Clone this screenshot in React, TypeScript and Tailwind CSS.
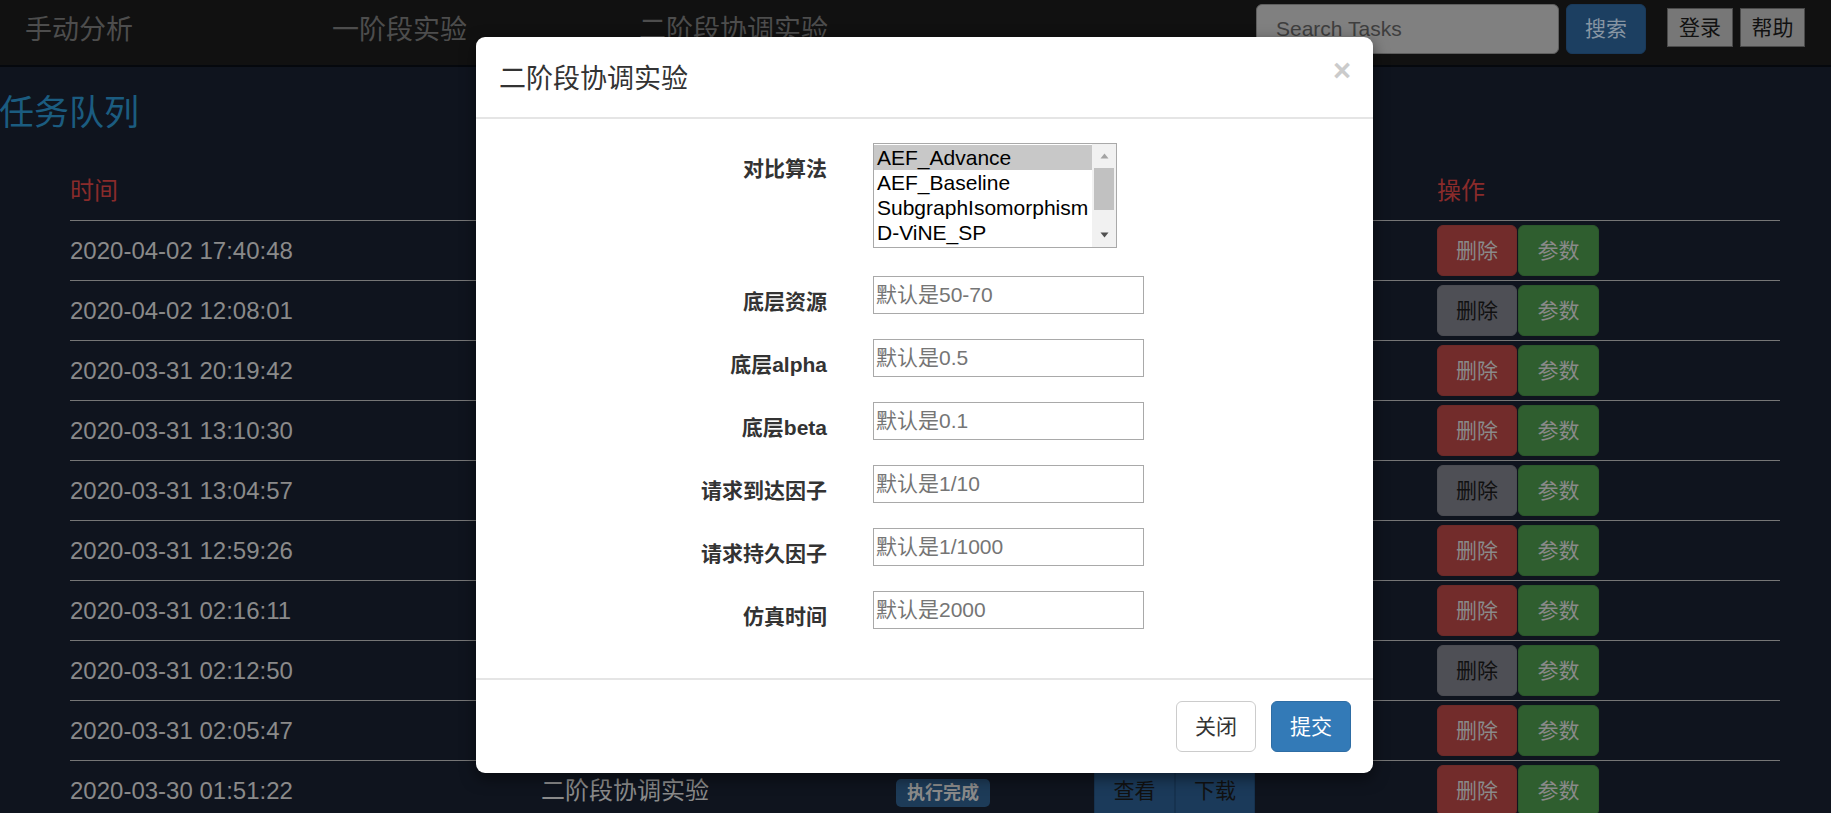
import React from "react";

const rows = [
  { t: "2020-04-02 17:40:48", gray: false },
  { t: "2020-04-02 12:08:01", gray: true },
  { t: "2020-03-31 20:19:42", gray: false },
  { t: "2020-03-31 13:10:30", gray: false },
  { t: "2020-03-31 13:04:57", gray: true },
  { t: "2020-03-31 12:59:26", gray: false },
  { t: "2020-03-31 02:16:11", gray: false },
  { t: "2020-03-31 02:12:50", gray: true },
  { t: "2020-03-31 02:05:47", gray: false },
  { t: "2020-03-30 01:51:22", gray: false },
];

const fields = [
  { label: "底层资源", ph: "默认是50-70" },
  { label: "底层alpha", ph: "默认是0.5" },
  { label: "底层beta", ph: "默认是0.1" },
  { label: "请求到达因子", ph: "默认是1/10" },
  { label: "请求持久因子", ph: "默认是1/1000" },
  { label: "仿真时间", ph: "默认是2000" },
];

const algos = ["AEF_Advance", "AEF_Baseline", "SubgraphIsomorphism", "D-ViNE_SP"];

function Navbar() {
  return (
    <div className="flex h-[67px] border-b-2 border-[#05080d] bg-[#111111]">
      <div className="flex pl-[25px] pt-[15px]">
        <a className="w-[307px] text-[27px] leading-[30px] text-[#4d4d4d]">手动分析</a>
        <a className="w-[307px] text-[27px] leading-[30px] text-[#4d4d4d]">一阶段实验</a>
        <a className="w-[307px] text-[27px] leading-[30px] text-[#4d4d4d]">二阶段协调实验</a>
      </div>
      <div className="ml-auto flex items-start pr-[26px] pt-[4px]">
        <input
          className="h-[50px] w-[303px] rounded-[6px] border border-[#5e5e5e] bg-[#808080] px-[19px] text-[21px] text-[#222] outline-none placeholder:text-[#3e3e3e]"
          placeholder="Search Tasks"
        />
        <button className="ml-[7px] h-[50px] w-[80px] rounded-[6px] border border-[#19395a] bg-[#1c3f61] text-[21px] text-[#8795a3]">
          搜索
        </button>
        <button className="ml-[21px] mt-[4px] h-[39px] w-[66px] border border-[#4a4a4a] bg-[#777777] text-[21px] text-[#111]">
          登录
        </button>
        <button className="ml-[7px] mt-[4px] h-[39px] w-[65px] border border-[#4a4a4a] bg-[#777777] text-[21px] text-[#111]">
          帮助
        </button>
      </div>
    </div>
  );
}

function Table() {
  return (
    <div className="ml-[70px] mt-[28px] w-[1710px]">
      <div className="grid h-[60px] grid-cols-[471px_355px_198px_343px_1fr] items-center border-b border-[#767676] text-[24px] text-[#8a2b2b]">
        <div>时间</div>
        <div>任务名称</div>
        <div>状态</div>
        <div>结果</div>
        <div>操作</div>
      </div>
      {rows.map((r) => (
        <div
          key={r.t}
          className="grid h-[60px] grid-cols-[471px_355px_198px_343px_1fr] items-center border-b border-[#767676] text-[24px] text-[#8a8a8a]"
        >
          <div>{r.t}</div>
          <div>二阶段协调实验</div>
          <div>
            <span className="inline-block h-[28px] rounded-[5px] bg-[#1d3b58] px-[11px] text-[18px] font-bold leading-[28px] text-[#8a8a8a]">
              执行完成
            </span>
          </div>
          <div className="flex">
            <button className="h-[51px] w-[81px] border border-[#16324f] bg-[#1b3a5a] text-[21px] text-[#111]">查看</button>
            <button className="h-[51px] w-[80px] border border-[#16324f] bg-[#1b3a5a] text-[21px] text-[#111]">下载</button>
          </div>
          <div className="flex gap-[1px]">
            {r.gray ? (
              <button className="h-[51px] w-[80px] rounded-[6px] border border-[#4a4b51] bg-[#4e4f55] text-[21px] text-[#111]">
                删除
              </button>
            ) : (
              <button className="h-[51px] w-[80px] rounded-[6px] border border-[#6c2a28] bg-[#722c2b] text-[21px] text-[#8a8a8a]">
                删除
              </button>
            )}
            <button className="h-[51px] w-[81px] rounded-[6px] border border-[#2b572b] bg-[#2f5e2f] text-[21px] text-[#8a8a8a]">
              参数
            </button>
          </div>
        </div>
      ))}
    </div>
  );
}

function ListBox() {
  return (
    <div className="flex h-[105px] w-[244px] border border-[#a9a9a9] bg-white">
      <div className="flex w-[218px] flex-col pt-[1px]">
        {algos.map((a, i) => (
          <div
            key={a}
            className={`h-[25px] whitespace-nowrap pl-[3px] text-[21px] leading-[25px] text-black ${
              i === 0 ? "bg-[#c8c8c8]" : ""
            }`}
          >
            {a}
          </div>
        ))}
      </div>
      <div className="flex w-[24px] flex-col items-center bg-[#f1f1f1]">
        <div className="flex h-[24px] w-full items-center justify-center">
          <svg width="9" height="6" viewBox="0 0 9 6">
            <path d="M4.5 0.5 L8.5 5.5 L0.5 5.5 Z" fill="#a3a3a3" />
          </svg>
        </div>
        <div className="h-[42px] w-[20px] bg-[#c1c1c1]" />
        <div className="flex-1" />
        <div className="flex h-[24px] w-full items-center justify-center">
          <svg width="9" height="6" viewBox="0 0 9 6">
            <path d="M0.5 0.5 L8.5 0.5 L4.5 5.5 Z" fill="#505050" />
          </svg>
        </div>
      </div>
    </div>
  );
}

function Modal() {
  return (
    <div className="absolute left-[476px] top-[37px] w-[897px] rounded-[9px] bg-white shadow-[0_5px_15px_rgba(0,0,0,0.5)]">
      <div className="flex h-[82px] items-start justify-between border-b-2 border-[#e5e5e5] pl-[23px] pr-[22px]">
        <h4 className="mt-[23px] text-[27px] font-normal leading-[38px] text-[#333]">二阶段协调实验</h4>
        <button className="mt-[18px] text-[31px] font-bold leading-[31px] text-[#cbcbcb]">×</button>
      </div>
      <div className="pb-[24px] pt-[24px]">
        <div className="mb-[28px] flex">
          <label className="h-[105px] w-[351px] pt-[11px] text-right text-[21px] font-bold leading-[30px] text-[#333]">
            对比算法
          </label>
          <div className="ml-[46px]">
            <ListBox />
          </div>
        </div>
        {fields.map((f) => (
          <div key={f.label} className="mb-[25px] flex h-[38px]">
            <label className="h-[38px] w-[351px] pt-[11px] text-right text-[21px] font-bold leading-[30px] text-[#333]">
              {f.label}
            </label>
            <input
              className="ml-[46px] h-[38px] w-[271px] border border-[#a9a9a9] bg-white px-[2px] text-[21px] text-black outline-none placeholder:text-[#757575]"
              placeholder={f.ph}
            />
          </div>
        ))}
      </div>
      <div className="flex h-[95px] items-start justify-end gap-[15px] border-t-2 border-[#e5e5e5] pr-[22px] pt-[21px]">
        <button className="h-[51px] w-[80px] rounded-[6px] border border-[#cccccc] bg-white text-[21px] text-[#333]">关闭</button>
        <button className="h-[51px] w-[80px] rounded-[6px] border border-[#2e6da4] bg-[#337ab7] text-[21px] text-white">提交</button>
      </div>
    </div>
  );
}

export default function App() {
  return (
    <div className="relative h-[813px] w-[1831px] overflow-hidden bg-[#0f141e] font-['Liberation_Sans','Noto_Sans_CJK_SC',sans-serif]">
      <Navbar />
      <h1 className="ml-[-1px] mt-[26px] text-[35px] font-normal leading-[40px] text-[#1b5c80]">任务队列</h1>
      <Table />
      <Modal />
    </div>
  );
}
